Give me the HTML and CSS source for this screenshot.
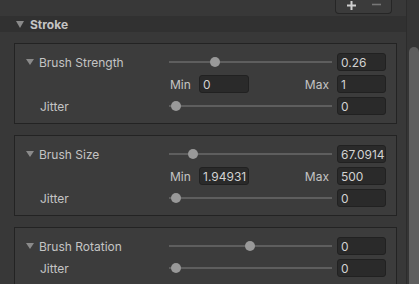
FILE: index.html
```html
<!DOCTYPE html>
<html lang="en">
<head>
    <meta charset="UTF-8">
    <meta name="viewport" content="width=device-width, initial-scale=1.0">
    <title>Stroke</title>
    <link rel="stylesheet" href="styles.css">
</head>
<body>
    <div class="inspector">
        <div class="content">
            <div class="toolbar">
                <div class="add-remove">
                    <svg class="btn-icon" width="11" height="11" viewBox="0 0 11 11"><path d="M5.5 1v9M1 5.5h9" stroke="#cfcfcf" stroke-width="2"/></svg>
                    <svg class="btn-icon" width="11" height="11" viewBox="0 0 11 11"><path d="M1 4.5h9" stroke="#777" stroke-width="1.6"/></svg>
                </div>
            </div>

            <div class="section-header">
                <span class="foldout"></span>
                <span class="section-title">Stroke</span>
            </div>

            <div class="panel">
                <div class="row">
                    <div class="label"><span class="foldout small"></span>Brush Strength</div>
                    <div class="slider"><span class="knob" style="left: 41px"></span></div>
                    <input class="field" type="text" value="0.26">
                </div>
                <div class="row range-row">
                    <span class="range-label">Min</span>
                    <input class="field wide" type="text" value="0">
                    <span class="range-label max">Max</span>
                    <input class="field" type="text" value="1">
                </div>
                <div class="row">
                    <div class="label indent">Jitter</div>
                    <div class="slider"><span class="knob" style="left: 2px"></span></div>
                    <input class="field" type="text" value="0">
                </div>
            </div>

            <div class="panel">
                <div class="row">
                    <div class="label"><span class="foldout small"></span>Brush Size</div>
                    <div class="slider"><span class="knob" style="left: 19px"></span></div>
                    <input class="field" type="text" value="67.0914">
                </div>
                <div class="row range-row">
                    <span class="range-label">Min</span>
                    <input class="field wide" type="text" value="1.94931">
                    <span class="range-label max">Max</span>
                    <input class="field" type="text" value="500">
                </div>
                <div class="row">
                    <div class="label indent">Jitter</div>
                    <div class="slider"><span class="knob" style="left: 2px"></span></div>
                    <input class="field" type="text" value="0">
                </div>
            </div>

            <div class="panel">
                <div class="row">
                    <div class="label"><span class="foldout small"></span>Brush Rotation</div>
                    <div class="slider"><span class="knob" style="left: 76px"></span></div>
                    <input class="field" type="text" value="0">
                </div>
                <div class="row">
                    <div class="label indent">Jitter</div>
                    <div class="slider"><span class="knob" style="left: 2px"></span></div>
                    <input class="field" type="text" value="0">
                </div>
            </div>
        </div>

        <div class="scrollbar">
            <div class="thumb"></div>
        </div>
    </div>
</body>
</html>
```

FILE: styles.css
```css
body {
    margin: 0;
    background-color: #383838;
    font-family: Inter, "Noto Sans", sans-serif;
    font-size: 12px;
    color: #c4c4c4;
    overflow: hidden;
}
.inspector {
    display: flex;
    width: 419px;
    height: 284px;
    overflow: hidden;
}
.content {
    flex: 1;
    min-width: 0;
}
.toolbar {
    height: 16px;
    display: flex;
    justify-content: flex-end;
    padding-right: 14px;
}
.add-remove {
    width: 57px;
    height: 14px;
    box-sizing: border-box;
    display: flex;
    gap: 14px;
    align-items: flex-start;
    padding: 0 0 0 10px;
    background-color: #3b3b3b;
    border: 1px solid #262626;
    border-top: none;
    border-radius: 0 0 4px 4px;
}
.btn-icon {
    display: block;
}
.section-header {
    height: 16px;
    display: flex;
    align-items: center;
    padding-left: 16px;
    background-color: #313131;
}
.section-title {
    font-weight: bold;
    margin-left: 6px;
}
.foldout {
    display: inline-block;
    width: 0;
    height: 0;
    border-left: 4.5px solid transparent;
    border-right: 4.5px solid transparent;
    border-top: 7px solid #8a8a8a;
}
.foldout.small {
    margin-right: 5px;
    border-top-width: 6px;
}
.panel {
    margin: 11px 9px 0 14px;
    padding: 9px 10px 8px 11px;
    background-color: #3c3c3c;
    border: 1px solid #232323;
    display: flex;
    flex-direction: column;
    gap: 4px;
}
.row {
    display: flex;
    align-items: center;
    height: 18px;
}
.label {
    width: 143px;
    flex-shrink: 0;
    display: flex;
    align-items: center;
    white-space: nowrap;
}
.label.indent {
    padding-left: 14px;
    box-sizing: border-box;
}
.slider {
    flex: 1;
    height: 18px;
    position: relative;
    margin-right: 5px;
}
.slider::before {
    content: "";
    position: absolute;
    left: 0;
    right: 0;
    top: 8px;
    height: 2px;
    background-color: #5e5e5e;
}
.knob {
    position: absolute;
    top: 4px;
    width: 10px;
    height: 10px;
    border-radius: 50%;
    background-color: #999999;
}
.field {
    width: 49px;
    height: 18px;
    box-sizing: border-box;
    flex-shrink: 0;
    padding: 0 0 0 3px;
    background-color: #2a2a2a;
    border: 1px solid #212121;
    border-radius: 3px;
    color: #d2d2d2;
    font-family: inherit;
    font-size: 12px;
    outline: none;
}
.field.wide {
    width: 50px;
}
.range-row {
    padding-left: 144px;
}
.range-label {
    width: 29px;
}
.range-label.max {
    width: auto;
    margin-left: auto;
    margin-right: 8px;
}
.scrollbar {
    width: 13px;
    box-sizing: border-box;
    flex-shrink: 0;
    padding: 47px 0 0 2px;
    background-color: #353535;
    border-left: 1px solid #2c2c2c;
}
.thumb {
    height: 260px;
    background-color: #5e5e5e;
    border-radius: 5px;
}
```
